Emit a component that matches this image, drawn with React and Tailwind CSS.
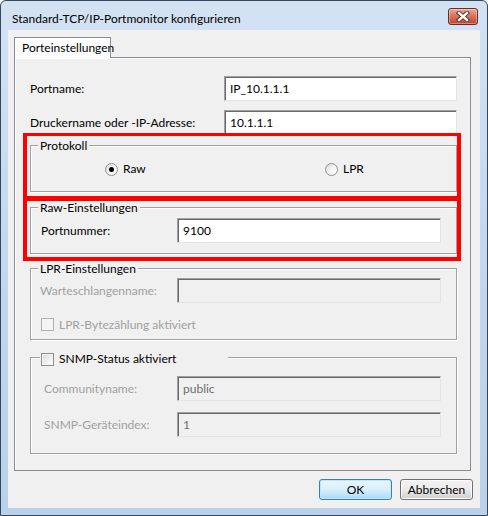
import React from "react";

function Field({ value, disabled, w }) {
  return (
    <div
      className={`${w} h-[25px] flex items-center pl-[5px] text-[12px] border border-t-[#a0a0a0] border-l-[#a0a0a0] border-r-[#e3e3e3] border-b-[#e3e3e3] shadow-[inset_1px_1px_0_#696969] ${
        disabled ? "bg-[#f0f0f0] text-[#6d6d6d]" : "bg-white text-black"
      }`}
    >
      {value}
    </div>
  );
}

function Radio({ checked }) {
  return (
    <span className="w-[13px] h-[13px] rounded-full border border-[#8e8f8f] bg-gradient-to-br from-[#d8d8d8] via-[#f4f4f4] to-white flex items-center justify-center shrink-0">
      {checked && <span className="w-[5px] h-[5px] rounded-full bg-black" />}
    </span>
  );
}

function Check({ disabled }) {
  return (
    <span
      className={`w-[13px] h-[13px] border shrink-0 ${
        disabled
          ? "border-[#b1b1b1] bg-[#f4f4f4]"
          : "border-[#8e8f8f] bg-gradient-to-br from-[#dcdcdc] to-white shadow-[inset_0_0_0_1px_#f4f4f4]"
      }`}
    />
  );
}

function Group({ legend, children, className }) {
  return (
    <div
      className={`relative w-[427px] border border-[#a0a0a0] shadow-[inset_1px_1px_0_#fff,1px_1px_0_#fff] ${className}`}
    >
      {legend}
      {children}
    </div>
  );
}

function Legend({ children }) {
  return (
    <span className="absolute left-[7px] top-[-8px] px-[2px] h-[16px] leading-[16px] bg-[#f0f0f0] text-black">
      {children}
    </span>
  );
}

export default function App() {
  return (
    <div className="w-[488px] h-[516px] relative font-['Lato',sans-serif] text-[12px] text-black">
      <div className="w-full h-full flex flex-col rounded-t-[6px] border border-[#34475e] bg-gradient-to-b from-[#d3e2f3] via-[#c3d7ee] to-[#b9d1ea] px-[7px] pb-[7px]">
        {/* title bar */}
        <div className="h-[29px] flex items-center justify-between">
          <span className="pl-[4px] pt-[6px] text-[12px] text-black">
            Standard-TCP/IP-Portmonitor konfigurieren
          </span>
          <div className="mr-[2px] mt-[2px] w-[30px] h-[17px] rounded-[3px] border border-[#6b2b22] bg-gradient-to-b from-[#e8a99a] via-[#d4705c] to-[#c4422a] shadow-[inset_0_0_0_1px_rgba(255,255,255,0.35)] flex items-center justify-center">
            <svg width="14" height="11" viewBox="0 0 14 11">
              <path d="M3 2 L11 9 M11 2 L3 9" stroke="#5e2219" strokeWidth="4.2" strokeLinecap="square" />
              <path d="M3 2 L11 9 M11 2 L3 9" stroke="#ffffff" strokeWidth="2.4" strokeLinecap="square" />
            </svg>
          </div>
        </div>

        {/* client */}
        <div className="flex-1 bg-[#f0f0f0] flex flex-col pl-[6px] pt-[7px]">
          <div className="flex">
            <div className="relative z-10 -mb-[1px] w-[97px] h-[21px] border border-[#898c95] border-b-0 bg-gradient-to-b from-white to-[#fbfbfb] pl-[7px] leading-[19px]">
              Porteinstellungen
            </div>
          </div>
          <div className="w-[457px] h-[414px] border border-[#898c95] shadow-[inset_1px_1px_0_#fff] bg-[#f0f0f0] pl-[15px] pt-[18px] flex flex-col">
            <div className="w-[427px] flex items-center justify-between">
              <span>Portname:</span>
              <Field w="w-[233px]" value="IP_10.1.1.1" />
            </div>
            <div className="w-[427px] mt-[9px] flex items-center justify-between">
              <span>Druckername oder -IP-Adresse:</span>
              <Field w="w-[233px]" value="10.1.1.1" />
            </div>

            <Group className="mt-[10px] h-[47px] pt-[14px]" legend={<Legend>Protokoll</Legend>}>
              <div className="flex items-center pl-[74px]">
                <div className="w-[220px] flex items-center gap-[5px]">
                  <Radio checked />
                  <span>Raw</span>
                </div>
                <div className="flex items-center gap-[5px]">
                  <Radio />
                  <span>LPR</span>
                </div>
              </div>
            </Group>

            <Group className="mt-[15px] h-[47px] pt-[10px] pl-[10px]" legend={<Legend>Raw-Einstellungen</Legend>}>
              <div className="flex items-center">
                <span className="w-[136px]">Portnummer:</span>
                <Field w="w-[264px]" value="9100" />
              </div>
            </Group>

            <Group className="mt-[14px] h-[72px] pt-[9px] pl-[9px]" legend={<Legend>LPR-Einstellungen</Legend>}>
              <div className="flex items-center">
                <span className="w-[137px] text-[#a0a0a0]">Warteschlangenname:</span>
                <Field w="w-[264px]" disabled value="" />
              </div>
              <div className="mt-[15px] ml-[1px] flex items-center gap-[5px]">
                <Check disabled />
                <span className="text-[#a0a0a0] leading-[13px]">LPR-Bytezählung aktiviert</span>
              </div>
            </Group>

            <Group
              className="mt-[17px] h-[97px] pt-[18px] pl-[13px]"
              legend={
                <span className="absolute left-[9px] top-[-7px] w-[188px] h-[16px] pl-[1px] bg-[#f0f0f0] flex items-center gap-[5px]">
                  <Check />
                  <span className="leading-[16px]">SNMP-Status aktiviert</span>
                </span>
              }
            >
              <div className="flex items-center">
                <span className="w-[133px] text-[#a0a0a0]">Communityname:</span>
                <Field w="w-[264px]" disabled value="public" />
              </div>
              <div className="mt-[11px] flex items-center">
                <span className="w-[133px] text-[#a0a0a0]">SNMP-Geräteindex:</span>
                <Field w="w-[264px]" disabled value="1" />
              </div>
            </Group>
          </div>

          <div className="mt-[8px] w-[459px] flex justify-end gap-[8px]">
            <button className="w-[73px] h-[21px] rounded-[3px] border border-[#3c7fb1] bg-gradient-to-b from-[#eaf6fd] via-[#d9f0fc] to-[#a7d9f5] shadow-[inset_0_0_0_1px_#bde6fd] text-[12px] leading-[19px] text-black">
              OK
            </button>
            <button className="w-[73px] h-[21px] rounded-[3px] border border-[#707070] bg-gradient-to-b from-[#f2f2f2] via-[#ebebeb] to-[#cfcfcf] shadow-[inset_0_0_0_1px_#fcfcfc] text-[12px] leading-[19px] text-black">
              Abbrechen
            </button>
          </div>
        </div>
      </div>

      {/* red annotation boxes */}
      <div className="absolute left-[23px] top-[133px] w-[438px] h-[67px] border-[4px] border-t-[3px] border-[#ff0000]" />
      <div className="absolute left-[23px] top-[197px] w-[438px] h-[64px] border-[4px] border-[#ff0000]" />
    </div>
  );
}
